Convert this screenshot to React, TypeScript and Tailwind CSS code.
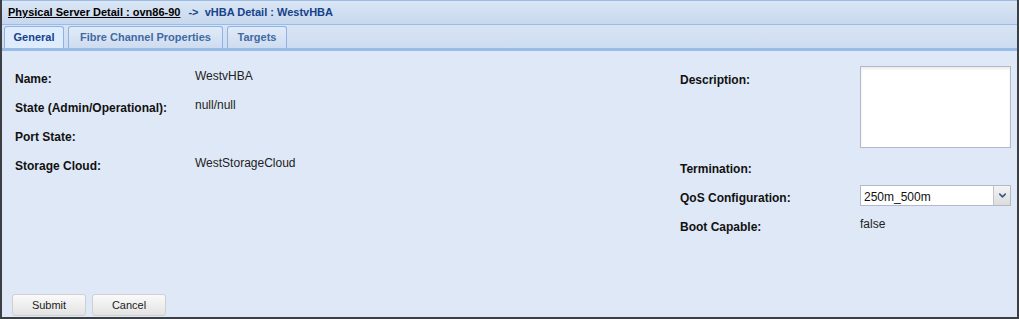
import { ChevronDown } from 'lucide-react';

const leftRows = [
  { label: 'Name:', value: 'WestvHBA' },
  { label: 'State (Admin/Operational):', value: 'null/null' },
  { label: 'Port State:', value: '' },
  { label: 'Storage Cloud:', value: 'WestStorageCloud' },
];

const font = { fontFamily: '"Liberation Sans", Arial, sans-serif' };

export default function App() {
  return (
    <div className="w-[1019px] h-[319px] flex flex-col bg-[#dfe8f6] border-2 border-t-0 border-[#3c3f44] text-[12px]" style={font}>
      {/* Header */}
      <div className="h-[25px] flex items-center pl-[6px] gap-[8px] text-[11px] font-bold bg-gradient-to-b from-[#dbe6f4] to-[#c6d7ee] border-t border-[#99bbe8] border-b border-b-[#99bbe8]">
        <span className="text-black underline">Physical Server Detail : ovn86-90</span>
        <span className="text-[#15428b]">-&gt;&nbsp; vHBA Detail : WestvHBA</span>
      </div>

      {/* Tabs */}
      <div className="h-[26px] flex items-end gap-[4px] pl-[2px] bg-gradient-to-b from-[#d7e4f3] to-[#cddcf1] border-b-[3px] border-[#99bbe8]">
        <div className="h-[22px] w-[60px] justify-center flex items-center rounded-t-[3px] border border-b-0 border-[#8db2e3] bg-[#deecfd] text-[11px] font-bold text-[#15428b]">General</div>
        <div className="h-[22px] w-[155px] justify-center flex items-center rounded-t-[3px] border border-b-0 border-[#8db2e3] bg-gradient-to-b from-[#e1ebf8] to-[#cedcf0] text-[11px] font-bold text-[#416aa3]">Fibre Channel Properties</div>
        <div className="h-[22px] w-[60px] justify-center flex items-center rounded-t-[3px] border border-b-0 border-[#8db2e3] bg-gradient-to-b from-[#e1ebf8] to-[#cedcf0] text-[11px] font-bold text-[#416aa3]">Targets</div>
      </div>

      {/* Body */}
      <div className="flex-1 flex pt-[15px]">
        <div className="w-[678px] pl-[13px] flex flex-col">
          {leftRows.map(r => (
            <div key={r.label} className="h-[29px] flex">
              <div className="w-[180px] pt-[4px] font-bold text-[#111]">{r.label}</div>
              <div className="pt-[1px] text-[#222]">{r.value}</div>
            </div>
          ))}
        </div>
        <div className="flex flex-col">
          <div className="h-[92px] flex">
            <div className="w-[180px] pt-[5px] font-bold text-[#111]">Description:</div>
            <div className="w-[151px] h-[82px] bg-white border border-[#b5b8c8] shadow-[inset_0_2px_3px_rgba(0,0,0,0.08)]" />
          </div>
          <div className="h-[26px] flex">
            <div className="w-[180px] pt-[2px] font-bold text-[#111]">Termination:</div>
          </div>
          <div className="h-[29px] flex">
            <div className="w-[180px] pt-[5px] font-bold text-[#111]">QoS Configuration:</div>
            <div className="w-[151px] h-[21px] mt-[1px] flex bg-white border border-[#b5b8c8]">
              <div className="flex-1 pl-[3px] pt-[2px] text-[#111]">250m_500m</div>
              <div className="w-[17px] flex items-center justify-center bg-gradient-to-b from-[#f4f4f4] to-[#dcdcdc] border-l border-[#c0c4cc]">
                <ChevronDown size={11} strokeWidth={3.5} className="text-[#3d5a8a]" />
              </div>
            </div>
          </div>
          <div className="h-[29px] flex">
            <div className="w-[180px] pt-[5px] font-bold text-[#111]">Boot Capable:</div>
            <div className="pt-[2px] text-[#222]">false</div>
          </div>
        </div>
      </div>

      {/* Buttons */}
      <div className="h-[23px] flex gap-[6px] pl-[10px]">
        <button className="w-[74px] h-[22px] text-[11px] text-[#222] rounded-[3px] border border-[#d0d0d0] bg-gradient-to-b from-[#fafafa] to-[#e3e3e3]">Submit</button>
        <button className="w-[74px] h-[22px] text-[11px] text-[#222] rounded-[3px] border border-[#d0d0d0] bg-gradient-to-b from-[#fafafa] to-[#e3e3e3]">Cancel</button>
      </div>
    </div>
  );
}
